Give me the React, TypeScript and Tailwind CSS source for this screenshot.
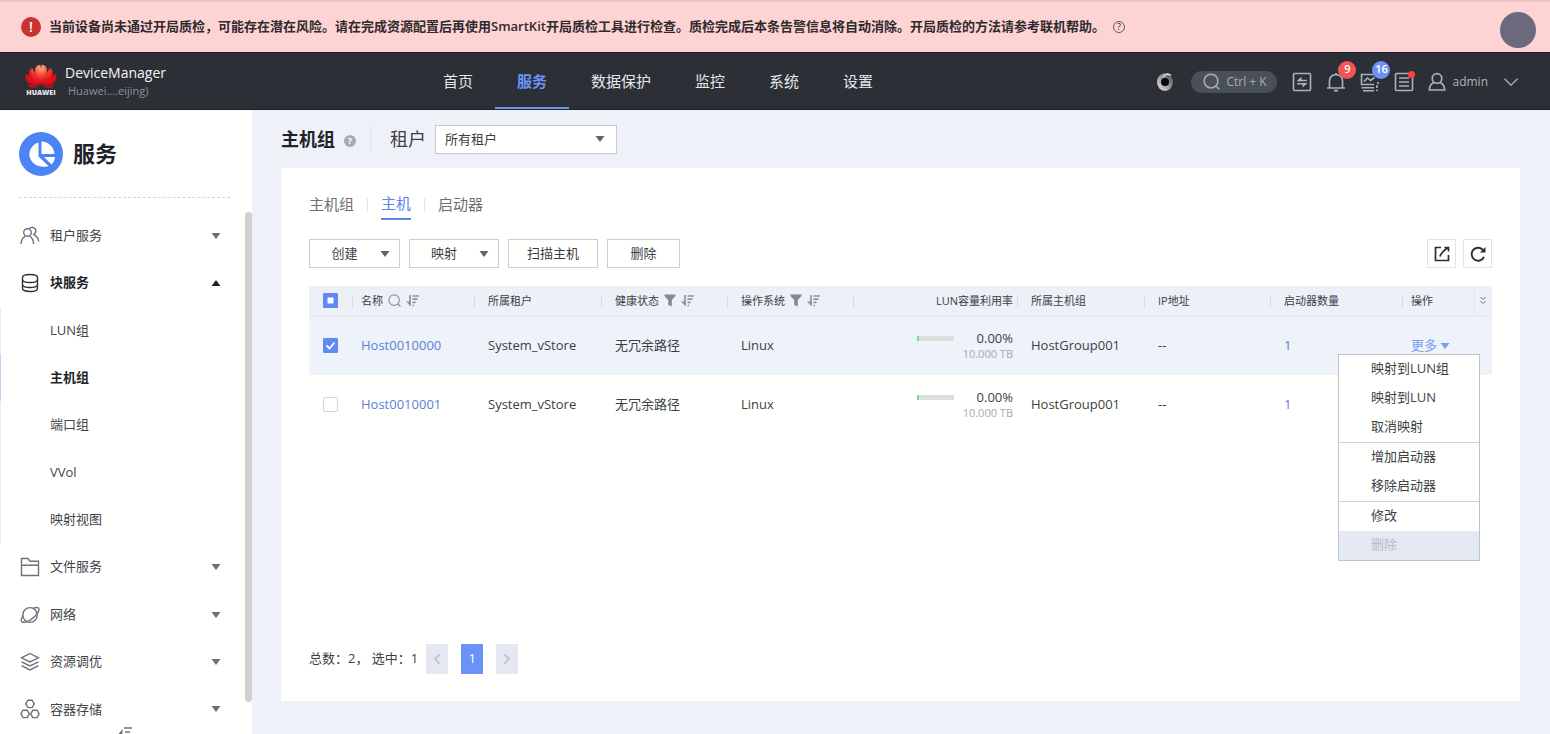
import { useState } from "react";
import type { ReactNode } from "react";

const hosts = [
  { name: "Host0010000", tenant: "System_vStore", health: "无冗余路径", os: "Linux", usage: "0.00%", size: "10.000 TB", group: "HostGroup001", ip: "--", initiators: 1 },
  { name: "Host0010001", tenant: "System_vStore", health: "无冗余路径", os: "Linux", usage: "0.00%", size: "10.000 TB", group: "HostGroup001", ip: "--", initiators: 1 },
];

const navItems = ["首页", "服务", "数据保护", "监控", "系统", "设置"];
const blockItems = ["LUN组", "主机组", "端口组", "VVol", "映射视图"];
const menuGroups = [["映射到LUN组", "映射到LUN", "取消映射"], ["增加启动器", "移除启动器"], ["修改", "删除"]];

function Triangle({ up = false, className = "" }: { up?: boolean; className?: string }) {
  return (
    <svg viewBox="0 0 10 6" width="10" height="6" fill="currentColor" className={`shrink-0 ${className}`}>
      <path d={up ? "M.5 6h9L5 0z" : "M.5 0h9L5 6z"} />
    </svg>
  );
}

function SortIcon() {
  return (
    <svg viewBox="0 0 13 13" width="13" height="13" fill="none" stroke="#8a93a6" strokeWidth="1.7" className="shrink-0">
      <path d="M4 1v9.500M6.500 2h6.500M6.500 5.200h5M6.500 8.400h3M6.500 11.500h1.500" />
      <path d="M4.800 7.500v5L0 7.500z" fill="#8a93a6" stroke="none" />
    </svg>
  );
}

function FilterIcon() {
  return (
    <svg viewBox="0 0 12 13" width="12" height="13" fill="#7e899d" className="shrink-0">
      <path d="M.5.5h11v1.500L7.800 6v6.500L4.200 11V6L.5 2z" />
    </svg>
  );
}

function LensIcon({ className = "" }: { className?: string }) {
  return (
    <svg viewBox="0 0 18 18" fill="none" stroke="currentColor" strokeWidth="1.600" className={`shrink-0 ${className}`}>
      <circle cx="8.500" cy="8.500" r="7.300" />
      <path d="M13.500 13.500l3.800 3.800" />
    </svg>
  );
}

function HuaweiLogo() {
  return (
    <div className="flex w-8 flex-col items-center">
      <svg viewBox="0 0 32 24" width="32" height="24">
        <defs>
          <radialGradient id="petal" gradientUnits="userSpaceOnUse" cx="16" cy="4" r="18">
            <stop offset="0" stopColor="#ffb88e" />
            <stop offset=".35" stopColor="#f4553a" />
            <stop offset=".7" stopColor="#ea1a1c" />
            <stop offset="1" stopColor="#e00814" />
          </radialGradient>
        </defs>
        <g fill="url(#petal)">
          <path d="M15.700 21C11.500 15 8.600 7 10.600 3.400 11.800 1.400 13.800.8 15.300.8c1 4 .9 14 .4 20.200z" />
          <path d="M16.300 21C20.500 15 23.400 7 21.400 3.400 20.200 1.400 18.200.8 16.700.8c-1 4-.9 14-.4 20.200z" />
          <path d="M14.800 21.600C13 16 10 8.500 7.200 4 4.400 5.400 3.400 8 4.200 10.600 5.400 14.400 10.400 18.800 14.800 21.600z" />
          <path d="M17.200 21.600C19 16 22 8.500 24.800 4 27.600 5.400 28.600 8 27.800 10.600 26.600 14.400 21.600 18.800 17.200 21.600z" />
          <path d="M13.800 22.200C9.800 17.400 5.400 12.600 1.200 10 .2 12.800.2 15.800 2.200 17.800 4.800 20.300 9.400 21.600 13.800 22.200z" />
          <path d="M18.200 22.200C22.200 17.400 26.600 12.600 30.800 10c1 2.800 1 5.800-1 7.800-2.600 2.500-7.200 3.800-11.600 4.400z" />
          <path d="M13.200 23C9.600 22.400 5.600 21 2.800 19.400c.8 2.600 2.400 4.200 4.400 4.200 2 .2 4.200-.1 6-.6z" />
          <path d="M18.800 23c3.600-.6 7.600-2 10.400-3.600-.8 2.600-2.400 4.200-4.400 4.200-2 .2-4.200-.1-6-.6z" />
        </g>
      </svg>
      <span className="text-[7px] leading-[10px] font-extrabold text-gray-200">HUAWEI</span>
    </div>
  );
}

const sideIcons: Record<string, ReactNode> = {
  tenant: (
    <>
      <circle cx="7.500" cy="6.500" r="3.800" />
      <path d="M1 18c.2-3.600 1.400-6 4-7.600M10 10.400c2.500 1.600 3.500 4 3.600 7.600M9.500 2.500c1.500-1.700 5.500-1.500 6.300 1.500.4 2-.3 3.500-2 4.600 2.600 1.300 4.600 3.800 5 6.900" />
    </>
  ),
  block: <path d="M2.500 4.500c0-4 15-4 15 0v11c0 4-15 4-15 0zM2.500 6.500c0 4 15 4 15 0M2.500 11.500c0 4 15 4 15 0" />,
  file: <path d="M1.500 18.500v-17h6.500l2 2.800h8.500v14.200zM1.500 8.300h17" />,
  network: (
    <>
      <ellipse cx="10" cy="10" rx="7.200" ry="7.400" />
      <path d="M13 3.500c3.500-1.700 6-1.300 6 .8 0 4-7.500 11.500-13.500 12.800-3 .6-4.800-.3-4.200-2.700.3-1.300 1-2.600 2-3.900" />
    </>
  ),
  tuning: <path d="M10 1.500l8.500 4.300L10 10 1.500 5.800zM1.500 9.800L10 14l8.500-4.200M1.500 13.600L10 17.900l8.500-4.300" />,
  container: (
    <>
      <path d="M8 1.200h4l2.300 3.600L12 8.600H8L5.700 4.800z" strokeLinejoin="round" />
      <path d="M3 18.600L.9 14.800l2.200-3.600h4l2.200 3.600-2.100 3.800zM12.800 18.600l-2.100-3.800 2.200-3.600h4l2.200 3.600-2.100 3.800z" strokeLinejoin="round" />
    </>
  ),
};

function SideItem({ icon, label, open = false }: { icon: string; label: string; open?: boolean }) {
  return (
    <button className={`flex items-center pr-[31px] pl-5 text-left ${open ? "font-semibold text-[#1f2329]" : "text-[#3f444d]"}`}>
      <svg viewBox="0 0 20 20" width="20" height="20" fill="none" stroke={open ? "#2b3038" : "#6b7280"} strokeWidth="1.400" className="mr-[10px] shrink-0">
        {sideIcons[icon]}
      </svg>
      {label}
      <Triangle up={open} className={open ? "ml-auto text-[#1f2329]" : "ml-auto text-[#66707f]"} />
    </button>
  );
}

function Sidebar() {
  return (
    <aside className="relative flex w-[252px] shrink-0 flex-col overflow-hidden bg-[#fffffd]">
      <div className="mr-[22px] ml-[19px] flex h-[88px] items-center gap-[10px] border-b border-dashed border-gray-300">
        <svg viewBox="0 0 44 44" width="44" height="44">
          <circle cx="22" cy="22" r="22" fill="#4a84f6" />
          <path d="M19.500 10.500v14l10 9.500A14 12.500 0 1 1 19.500 10.500z" fill="#fff" />
          <path d="M22.500 9.500c7 .3 12.500 5.500 13 12.500h-13z" fill="#fff" />
          <path d="M25 25h11c-.3 3-1.500 5.500-3.500 7.500z" fill="#fff" />
        </svg>
        <h1 className="text-[22px] font-semibold text-[#1f2329]">服务</h1>
      </div>
      <nav className="mt-[14px] mb-px grid flex-1 auto-rows-fr text-[13px]">
        <SideItem icon="tenant" label="租户服务" />
        <SideItem icon="block" label="块服务" open />
        {blockItems.map((label) => (
          <a
            key={label}
            href="#"
            className={`flex items-center border-l pl-[49px] ${label === "主机组" ? "border-[#c5d0ee] font-semibold text-[#1f2329]" : "border-[#e9eefb] text-[#3f444d]"}`}
          >
            {label}
          </a>
        ))}
        <SideItem icon="file" label="文件服务" />
        <SideItem icon="network" label="网络" />
        <SideItem icon="tuning" label="资源调优" />
        <SideItem icon="container" label="容器存储" />
      </nav>
      {/* scroll thumb */}
      <div className="absolute top-[102px] right-0 bottom-8 w-[7px] rounded-full bg-[#cfcfcf]" />
      {/* collapse handle */}
      <svg viewBox="0 0 14 7" width="14" height="7" fill="none" stroke="#70757d" strokeWidth="1.500" className="absolute bottom-0 left-[118px]">
        <path d="M6 1h8M7 5h5" />
        <path d="M4.500 2v5H.5z" fill="#70757d" stroke="none" />
      </svg>
    </aside>
  );
}

function TopBar() {
  return (
    <header className="flex h-[58px] shrink-0 items-stretch border-y border-[#1d2127] bg-[#2c2f35] pr-8 pl-[25px] text-[#aab1bf]">
      <div className="flex w-[396px] items-center gap-2">
        <HuaweiLogo />
        <div>
          <div className="text-sm leading-5 text-gray-100">DeviceManager</div>
          <div className="pl-[3px] text-[11px] leading-4 text-[#8a909c]">Huawei....eijing)</div>
        </div>
      </div>
      <nav className="flex text-[15px]">
        {navItems.map((item) => (
          <a
            key={item}
            href="#"
            className={`flex items-center border-b-2 px-[22px] pt-[2px] ${item === "服务" ? "border-[#6b93f7] font-semibold text-[#6b93f7]" : "border-transparent text-gray-200"}`}
          >
            {item}
          </a>
        ))}
      </nav>
      <div className="ml-auto flex items-center pt-px">
        <svg viewBox="0 0 20 20" width="20" height="20" className="mr-4">
          <defs>
            <linearGradient id="eye" x1="1" y1="0" x2="0" y2="1">
              <stop offset="0" stopColor="#444" />
              <stop offset=".5" stopColor="#999" />
              <stop offset="1" stopColor="#eee" />
            </linearGradient>
          </defs>
          <ellipse cx="10" cy="10" rx="8" ry="9" fill="url(#eye)" />
          <circle cx="10" cy="10" r="4" fill="#080808" />
          <path d="M8 5c1.500-3 5-4 8-1.500" stroke="#ddd" strokeWidth="1.600" fill="none" />
        </svg>
        <button className="mr-[15px] flex h-[22px] w-[86px] items-center gap-[6px] rounded-full bg-[#4a5059] pl-3 text-xs font-medium text-[#a7aebb]">
          <LensIcon className="size-[17px]" />
          Ctrl + K
        </button>
        <div className="mr-[14px] flex gap-[14px]">
          <button aria-label="切换">
            <svg viewBox="0 0 20 20" width="20" height="20" fill="none" stroke="currentColor" strokeWidth="1.600">
              <rect x="1.500" y="1.500" width="17" height="17" rx="1" />
              <path d="M15 8.500H6M5 11.800h9" />
              <path d="M4.500 9.300L9.500 4.800v4.500zM15.500 11v.2L10.500 15.500V11z" fill="currentColor" stroke="none" />
            </svg>
          </button>
          <button aria-label="告警" className="relative">
            <svg viewBox="0 0 20 20" width="20" height="20" fill="none" stroke="currentColor" strokeWidth="1.700">
              <path d="M1 16h18M3.500 16V9c0-8.500 13-8.500 13 0v7M8 18.700h4M10 1v2" />
            </svg>
            <span className="absolute -top-[11px] left-3 flex size-[18px] items-center justify-center rounded-full bg-[#f25555] text-[11px] font-semibold text-white">9</span>
          </button>
          <button aria-label="事件" className="relative">
            <svg viewBox="0 0 20 20" width="20" height="20" fill="none" stroke="currentColor" strokeWidth="1.600">
              <path d="M18 10v2M14 12.500H1.500V2.500H14M4 9.500l3.500-3.500L10.500 8.500l4-3M1.500 15.800H14M3 18.800h11M17 13v3M17 17.500v1.800" />
            </svg>
            <span className="absolute -top-[11px] left-3 flex size-[18px] items-center justify-center rounded-full bg-[#6b93f7] text-[11px] font-semibold text-white">16</span>
          </button>
          <button aria-label="任务" className="relative">
            <svg viewBox="0 0 20 20" width="20" height="20" fill="none" stroke="currentColor" strokeWidth="1.600">
              <rect x="1.500" y="1.500" width="17" height="17" rx="1" />
              <path d="M5 6h10M5 10h10M5 14h10" />
            </svg>
            <span className="absolute -top-px -right-px size-[7px] rounded-full bg-[#ff4040]" />
          </button>
        </div>
        <button className="flex items-center text-xs">
          <svg viewBox="0 0 18 20" width="18" height="20" fill="none" stroke="currentColor" strokeWidth="1.700" className="mr-[6px]">
            <circle cx="9" cy="6.500" r="4.800" />
            <path d="M6 10.500c-2.600 1-4.500 3.500-4.700 7.500h15.400c-.2-4-2.100-6.500-4.700-7.500" />
          </svg>
          admin
          <svg viewBox="0 0 14 8" width="14" height="8" fill="none" stroke="currentColor" strokeWidth="1.300" className="ml-4">
            <path d="M.5.8L7 7.200 13.500.8" />
          </svg>
        </button>
      </div>
    </header>
  );
}

function Th({ label, sort, filter, search, className = "pl-[13px]" }: { label: string; sort?: boolean; filter?: boolean; search?: boolean; className?: string }) {
  return (
    <th className="p-0 text-left font-normal">
      <div className={`flex h-3 items-center gap-[5px] border-l border-[#d5dae4] whitespace-nowrap ${className}`}>
        {label}
        {search && <LensIcon className="size-[13px] text-[#8a93a6]" />}
        {filter && <FilterIcon />}
        {sort && <SortIcon />}
      </div>
    </th>
  );
}

function CheckBox({ label, checked, mixed, onChange }: { label: string; checked: boolean; mixed?: boolean; onChange: () => void }) {
  return (
    <label className="relative ml-[14px] block size-[15px]">
      <input
        type="checkbox"
        aria-label={label}
        checked={checked}
        onChange={onChange}
        className={`block size-[15px] appearance-none rounded-[1px] border ${checked || mixed ? "border-[#6089f4] bg-[#6089f4]" : "border-gray-300 bg-white"}`}
      />
      {(checked || mixed) && (
        <svg viewBox="0 0 15 15" className="pointer-events-none absolute inset-0">
          {mixed ? <path d="M4.500 4.500h6v6h-6z" fill="#fff" /> : <path d="M3.500 7.500l3 3 5-6" fill="none" stroke="#fff" strokeWidth="1.800" />}
        </svg>
      )}
    </label>
  );
}

function ActionMenu() {
  return (
    <div className="absolute top-[37px] -right-[6px] z-10 w-[142px] divide-y divide-[#cfd3da] border border-[#bcc4d2] bg-[#fffffd] text-[13px] text-[#3a3f47]">
      {menuGroups.map((group) => (
        <div key={group[0]}>
          {group.map((item) => (
            <button
              key={item}
              disabled={item === "删除"}
              className="block h-[29px] w-full pl-8 text-left disabled:bg-[#e4e9f4] disabled:text-[#b8bcc6]"
            >
              {item}
            </button>
          ))}
        </div>
      ))}
    </div>
  );
}

function HostTable() {
  const [selected, setSelected] = useState(["Host0010000"]);
  const [openRow, setOpenRow] = useState<string | null>("Host0010000");
  const all = selected.length === hosts.length;

  const toggle = (name: string) =>
    setSelected((cur) => (cur.includes(name) ? cur.filter((n) => n !== name) : [...cur, name]));

  return (
    <table className="mt-[18px] w-full table-fixed border-collapse text-[13px] text-[#3a3f47]">
      <colgroup>
        <col className="w-[43px]" />
        <col className="w-[122px]" />
        <col className="w-[127px]" />
        <col className="w-[126px]" />
        <col className="w-[126px]" />
        <col className="w-[164px]" />
        <col className="w-[127px]" />
        <col className="w-[126px]" />
        <col className="w-[132px]" />
        <col className="w-[72px]" />
        <col className="w-[18px]" />
      </colgroup>
      <thead>
        <tr className="h-[30px] border-b border-[#e2e7ef] bg-[#edf1f7] text-[11px]">
          <th className="p-0">
            <CheckBox label="全选" checked={all} mixed={!all && selected.length > 0} onChange={() => setSelected(all ? [] : hosts.map((h) => h.name))} />
          </th>
          <Th label="名称" search sort className="pl-2" />
          <Th label="所属租户" />
          <Th label="健康状态" filter sort />
          <Th label="操作系统" filter sort />
          <Th label="LUN容量利用率" className="justify-end pr-1" />
          <Th label="所属主机组" />
          <Th label="IP地址" />
          <Th label="启动器数量" />
          <Th label="操作" className="pl-2" />
          <th className="border-l border-[#e2e7ef] p-0">
            <svg viewBox="0 0 8 9" width="8" height="9" fill="none" stroke="#6b7280" className="mx-auto">
              <path d="M1.500 1L4 3.500 6.500 1M1.500 5L4 7.500 6.500 5" />
            </svg>
          </th>
        </tr>
      </thead>
      <tbody>
        {hosts.map((host) => (
          <tr key={host.name} className={selected.includes(host.name) ? "h-[59px] bg-[#eef2f9]" : "h-[59px]"}>
            <td className="p-0">
              <CheckBox label={host.name} checked={selected.includes(host.name)} onChange={() => toggle(host.name)} />
            </td>
            <td className="p-0 pl-[9px]">
              <a href="#" className="text-[#5b7fd6]">{host.name}</a>
            </td>
            <td className="p-0 pl-[14px]">{host.tenant}</td>
            <td className="p-0 pl-[14px]">{host.health}</td>
            <td className="p-0 pl-[14px]">{host.os}</td>
            <td className="p-0 pr-1">
              <div className="flex items-start justify-end gap-[9px]">
                <div className="mt-[5px] h-[5px] w-[37px] border-l-2 border-[#6fdc9b] bg-[#dededc]" />
                <div className="text-right leading-[15px]">
                  <div>{host.usage}</div>
                  <div className="text-[11px] text-[#a3a9b5]">{host.size}</div>
                </div>
              </div>
            </td>
            <td className="p-0 pl-[14px]">{host.group}</td>
            <td className="p-0 pl-[14px]">{host.ip}</td>
            <td className="p-0 pl-[14px]">
              <a href="#" className="text-[#5b7fd6]">{host.initiators}</a>
            </td>
            <td className="relative p-0 pl-[9px]">
              {(openRow === null || openRow === host.name) && (
                <button
                  onClick={() => setOpenRow(openRow ? null : host.name)}
                  className="flex items-center gap-[3px] text-[#7b9cf3]"
                >
                  更多
                  <Triangle />
                </button>
              )}
              {openRow === host.name && <ActionMenu />}
            </td>
            <td />
          </tr>
        ))}
      </tbody>
    </table>
  );
}

export default function App() {
  const outlined = "flex h-[29px] items-center justify-center border border-[#c9cfd9]";

  return (
    <div className="relative flex min-h-screen flex-col bg-[#eef2f8] font-['Open_Sans','Noto_Sans_CJK_SC',sans-serif] text-[#3a3f47]">
      {/* Alert banner */}
      <div className="flex h-[52px] shrink-0 items-center border-t-2 border-[#eec3c3] bg-[#fed3d3] pl-[21px] text-[13px] font-semibold text-[#2f2a2d]">
        <span className="mr-2 flex size-5 items-center justify-center rounded-full bg-[#c93430] text-sm text-white">!</span>
        当前设备尚未通过开局质检，可能存在潜在风险。请在完成资源配置后再使用SmartKit开局质检工具进行检查。质检完成后本条告警信息将自动消除。开局质检的方法请参考联机帮助。
        <span className="ml-2 flex size-3 items-center justify-center rounded-full border border-[#665a60] text-[9px] font-normal">?</span>
      </div>
      <div className="absolute top-3 right-[14px] size-9 rounded-full bg-[#6b697b]" />

      <TopBar />

      <div className="flex flex-1">
        <Sidebar />
        <main className="flex min-w-0 flex-1 flex-col pr-[30px] pb-[33px] pl-[29px]">
          <div className="flex h-[58px] items-center text-lg">
            <h2 className="font-semibold text-[#1f2329]">主机组</h2>
            <span className="mt-1 ml-[9px] flex size-3 items-center justify-center rounded-full bg-[#a3aab8] text-[9px] font-bold text-white">?</span>
            <label htmlFor="tenant" className="ml-[14px] border-l border-[#dfe4ec] pl-[19px]">租户</label>
            <div className="relative ml-[9px]">
              <select id="tenant" className="block h-[29px] w-[182px] appearance-none border border-[#c5cad4] bg-[#fffffd] pl-[9px] text-[13px]">
                <option>所有租户</option>
              </select>
              <Triangle className="pointer-events-none absolute top-[11px] right-3 text-[#5d6573]" />
            </div>
          </div>

          <section className="flex flex-1 flex-col bg-[#fffffd] px-7 pb-[27px]">
            <div className="mt-[21px] flex h-[31px] items-center text-[15px] text-[#6b7078]">
              <button>主机组</button>
              <span className="mx-[13px] h-[14px] w-px bg-[#dfe3ea]" />
              <button className="h-full border-b-2 border-[#5b84ee] text-[#5b84ee]">主机</button>
              <span className="mx-[13px] h-[14px] w-px bg-[#dfe3ea]" />
              <button>启动器</button>
            </div>

            <div className="mt-[19px] flex gap-[9px] text-[13px]">
              <button className={`${outlined} w-[91px] gap-[22px] pl-3`}>
                创建 <Triangle className="text-[#5d6573]" />
              </button>
              <button className={`${outlined} w-[90px] gap-[22px] pl-3`}>
                映射 <Triangle className="text-[#5d6573]" />
              </button>
              <button className={`${outlined} w-[90px]`}>扫描主机</button>
              <button className={`${outlined} w-[73px]`}>删除</button>
              <div className="ml-auto flex gap-[7px]">
                <button aria-label="导出" className="flex h-[29px] w-[29px] items-center justify-center border border-[#e2e4e8]">
                  <svg viewBox="0 0 16 16" width="16" height="16" fill="none" stroke="#2b2f36" strokeWidth="1.700">
                    <path d="M7 1.500H1.500v13h13V9M6 10.500c1-3 3.500-6 7.500-8.500M10.500 1.500h4v4" />
                  </svg>
                </button>
                <button aria-label="刷新" className="flex h-[29px] w-[29px] items-center justify-center border border-[#e2e4e8]">
                  <svg viewBox="0 0 16 16" width="16" height="16" fill="none" stroke="#2b2f36" strokeWidth="1.900">
                    <path d="M14 11A6.500 6.500 0 1 1 13.500 4.500" />
                    <path d="M15.500 1v5.500H10z" fill="#2b2f36" stroke="none" />
                  </svg>
                </button>
              </div>
            </div>

            <HostTable />

            <div className="mt-auto flex items-center text-[13px]">
              <span className="whitespace-pre">总数：2， 选中：1</span>
              <div className="ml-2 flex gap-[13px]">
                <button aria-label="上一页" className="flex h-[30px] w-[22px] items-center justify-center bg-[#e3e8f2]">
                  <svg viewBox="0 0 6 10" width="6" height="10" fill="none" stroke="#b3b8c3" strokeWidth="1.400">
                    <path d="M5.500.5L1 5l4.500 4.500" />
                  </svg>
                </button>
                <button className="h-[30px] w-[22px] bg-[#6b93f7] text-white">1</button>
                <button aria-label="下一页" className="flex h-[30px] w-[22px] items-center justify-center bg-[#e3e8f2]">
                  <svg viewBox="0 0 6 10" width="6" height="10" fill="none" stroke="#b3b8c3" strokeWidth="1.400">
                    <path d="M.5.5L5 5 .5 9.500" />
                  </svg>
                </button>
              </div>
            </div>
          </section>
        </main>
      </div>
    </div>
  );
}
